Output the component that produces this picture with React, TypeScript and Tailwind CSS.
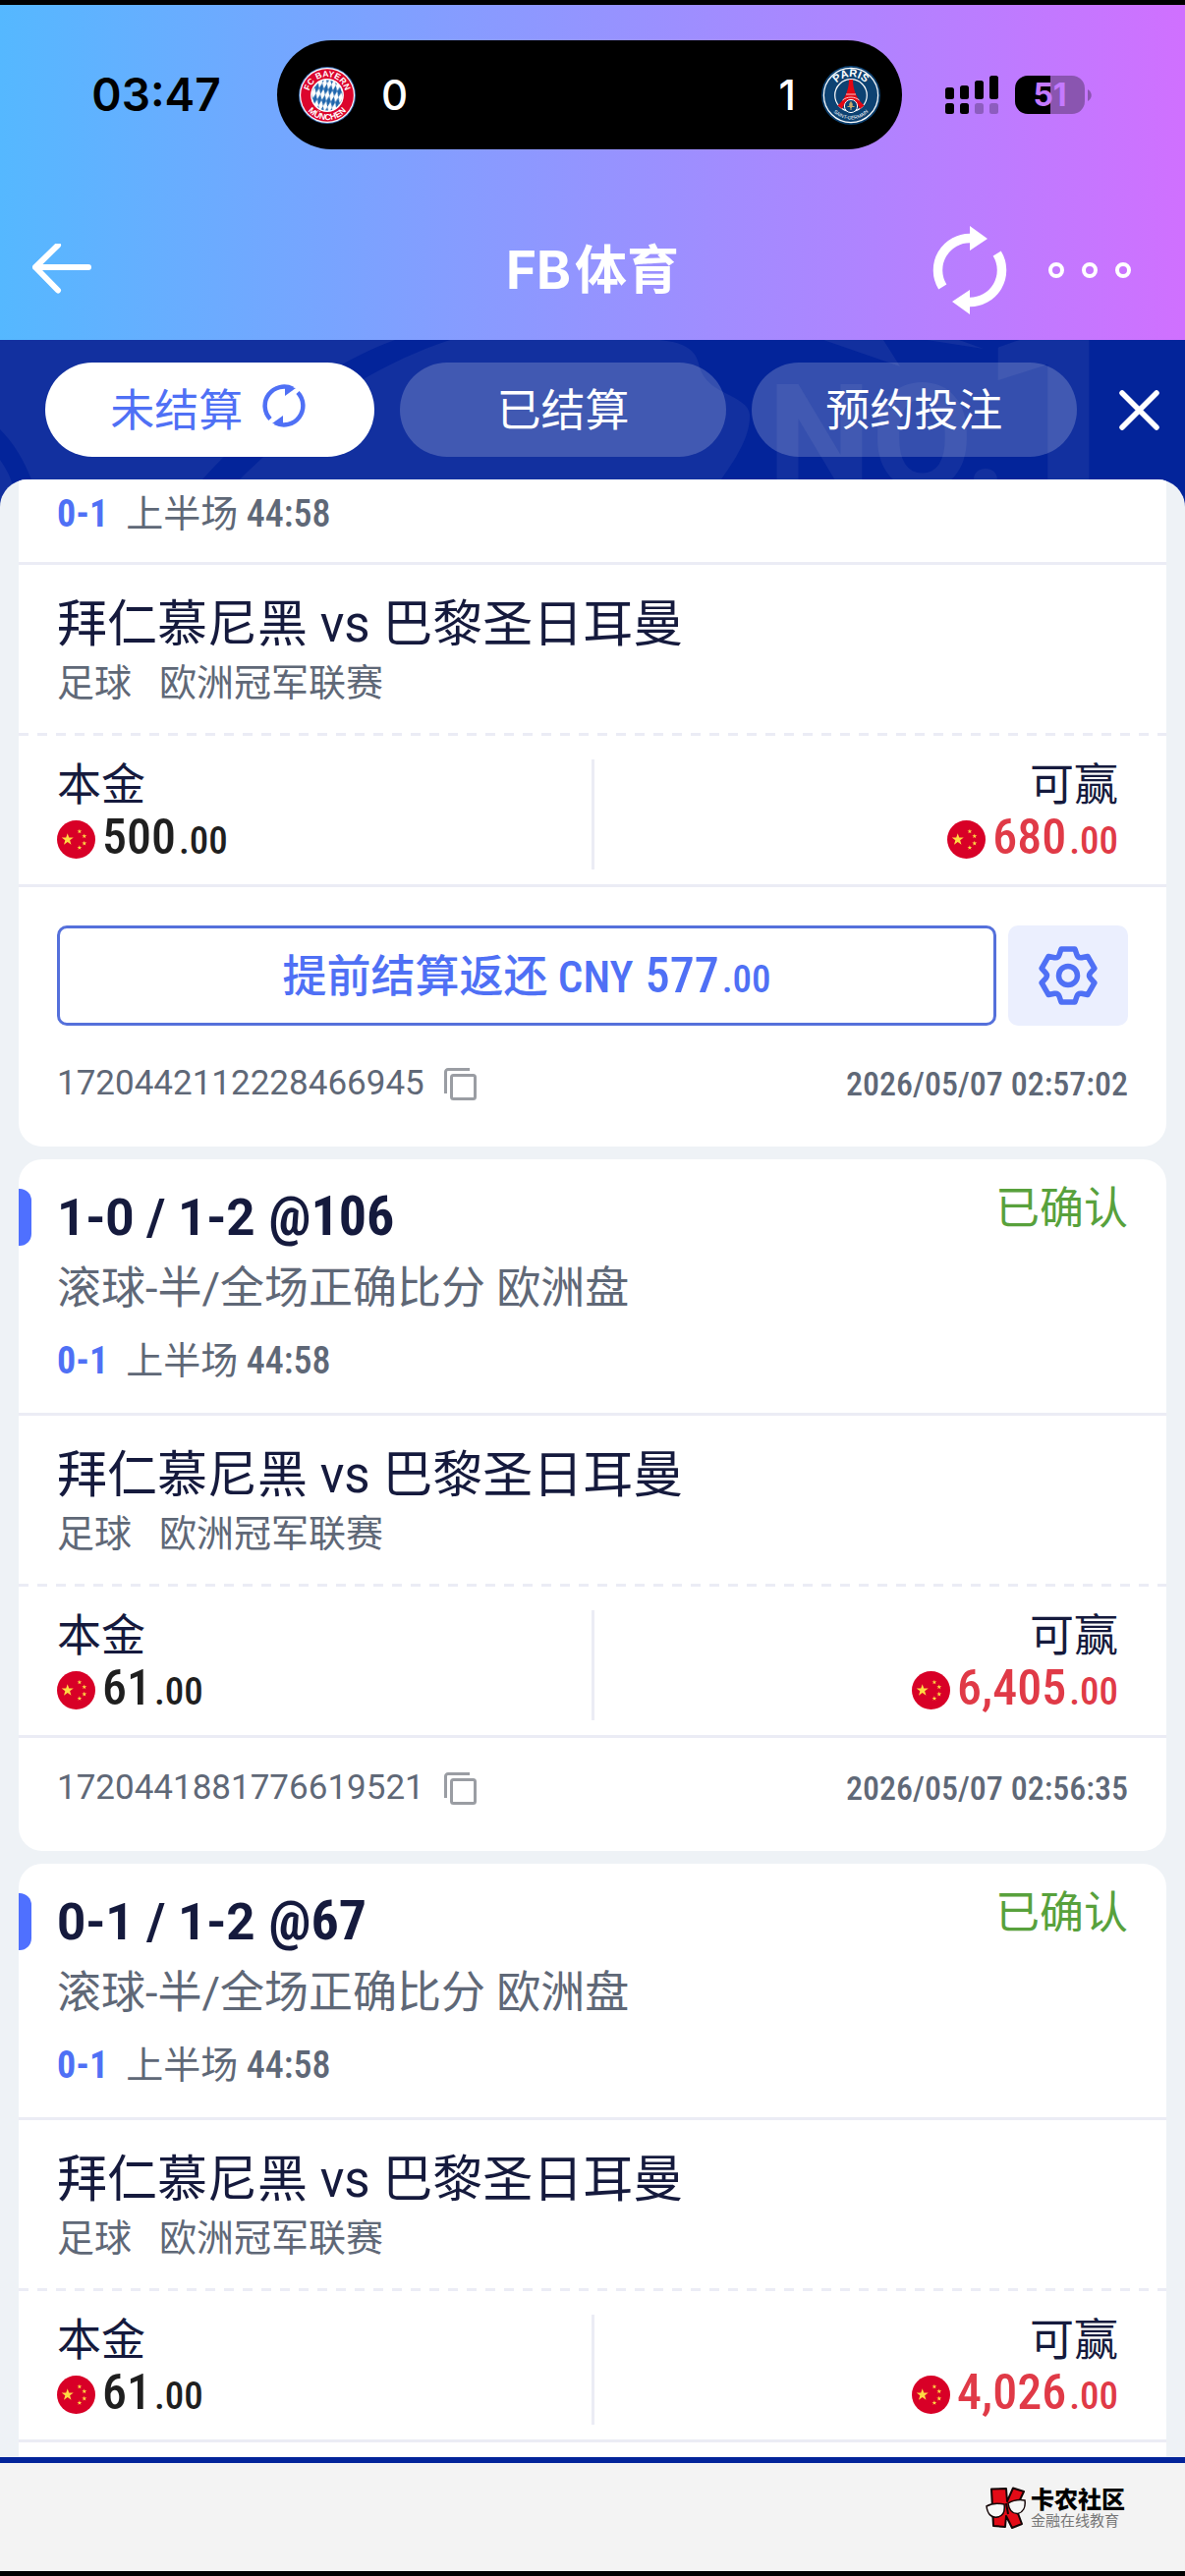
import React from "react";

const CONDENSED = "font-['Roboto_Condensed','Noto_Sans_CJK_SC',sans-serif]";

function BayernLogo() {
  return (
    <svg viewBox="-30 -30 60 60" className="size-[58px] shrink-0" role="img" aria-label="FC Bayern München">
      <defs>
        <pattern id="lozenge" width="4.800" height="12" patternUnits="userSpaceOnUse" patternTransform="rotate(10)">
          <rect width="4.800" height="12" fill="#fff" />
          <path d="M2.400 0L4.800 6L2.400 12L0 6Z" fill="#1f66ad" />
        </pattern>
        <path id="bayern-top" d="M-19.500 0A19.500 19.500 0 0 1 19.500 0" />
        <path id="bayern-bottom" d="M-26 0A26 26 0 0 0 26 0" />
      </defs>
      <circle r="30" fill="#3f6fb5" />
      <circle r="29" fill="#fff" />
      <circle r="27.800" fill="#dc052d" />
      <circle r="17.500" fill="#fff" />
      <circle r="16" fill="url(#lozenge)" />
      <g fill="#fff" fontFamily="Liberation Sans" fontWeight="700" fontSize="9" textAnchor="middle">
        <text><textPath href="#bayern-top" startOffset="50%">FC BAYERN</textPath></text>
        <text><textPath href="#bayern-bottom" startOffset="50%">MÜNCHEN</textPath></text>
      </g>
    </svg>
  );
}

function ParisLogo() {
  return (
    <svg viewBox="-30 -30 60 60" className="size-[60px] shrink-0" role="img" aria-label="Paris Saint-Germain">
      <defs>
        <path id="paris-top" d="M-19 0A19 19 0 0 1 19 0" />
        <path id="paris-bottom" d="M-24.500 0A24.500 24.500 0 0 0 24.500 0" />
      </defs>
      <circle r="30" fill="#0d4272" />
      <circle r="27.600" fill="none" stroke="#fff" strokeWidth="1.200" />
      <circle r="16.300" fill="none" stroke="#fff" strokeWidth="1.200" />
      <path d="M-2 -16H2C2 -7 5 3 13.500 10.500L9 14C6 4 -6 4 -9 14L-13.500 10.500C-5 3 -2 -7 -2 -16Z" fill="#e30613" />
      <path d="M-5 -1H5M-8.500 5C-4 1 4 1 8.500 5" stroke="#fff" strokeWidth=".8" fill="none" />
      <circle cy="11" r="6.600" fill="#0d4272" stroke="#fff" strokeWidth="1" />
      <path d="M0 6.500C2 9 1.500 11 0 13C-1.500 11 -2 9 0 6.500ZM-3.500 11.500H3.500M0 12V15" fill="#c9a76a" stroke="#c9a76a" strokeWidth="1" />
      <g fill="#fff" fontFamily="Liberation Sans" textAnchor="middle">
        <text fontSize="11" fontWeight="700"><textPath href="#paris-top" startOffset="50%">PARIS</textPath></text>
        <text fontSize="5"><textPath href="#paris-bottom" startOffset="50%">SAINT-GERMAIN</textPath></text>
      </g>
    </svg>
  );
}

function Signal() {
  return (
    <svg viewBox="0 0 54 39" className="h-[39px] w-[54px]" role="img" aria-label="信号">
      <rect x="0" y="12" width="9" height="12" rx="2.500" />
      <rect x="15" y="10" width="9" height="14" rx="2.500" />
      <rect x="30" y="5" width="9" height="19" rx="2.500" />
      <rect x="45" y="0" width="9" height="24" rx="2.500" />
      <rect x="0" y="28" width="9" height="11" rx="2.500" />
      <rect x="15" y="28" width="9" height="11" rx="2.500" />
      <rect x="30" y="28" width="9" height="11" rx="2.500" opacity=".25" />
      <rect x="45" y="28" width="9" height="11" rx="2.500" opacity=".25" />
    </svg>
  );
}

function Battery() {
  return (
    <div className="flex items-center gap-[3px]">
      <div className="flex h-[39px] w-[71px] items-center justify-center rounded-[13px] bg-[linear-gradient(90deg,#000_0_51%,#8a55b0_51%)] font-['Inter',sans-serif] text-[32px] leading-none font-bold text-[#c47aff]">
        51
      </div>
      <svg viewBox="0 0 4 12" className="h-3 w-1" aria-hidden="true">
        <path d="M0 0C5 3 5 9 0 12Z" fill="#8a55b0" />
      </svg>
    </div>
  );
}

function StatusBar() {
  return (
    <div className="flex h-[111px] items-center">
      <time className="w-[282px] pl-9 text-center font-['Inter',sans-serif] text-[46px] font-semibold text-black">03:47</time>
      <div className="flex h-full flex-1 items-center justify-between rounded-full bg-black px-[22px] font-['Inter',sans-serif] text-[42px] font-medium text-white">
        <div className="flex items-center gap-[26px]">
          <BayernLogo />
          <span>0</span>
        </div>
        <div className="flex items-center gap-[26px]">
          <span>1</span>
          <ParisLogo />
        </div>
      </div>
      <div className="flex w-[288px] items-center gap-[17px] pl-11">
        <Signal />
        <Battery />
      </div>
    </div>
  );
}

function TitleBar() {
  return (
    <header className="grid h-[194px] grid-cols-[1fr_auto_1fr] items-center px-[33px] pt-[52px] text-white">
      <button type="button" aria-label="返回" className="justify-self-start">
        <svg viewBox="0 0 60 54" className="h-[54px] w-[60px]" fill="none" stroke="currentColor" strokeWidth="6" strokeLinecap="round" strokeLinejoin="round">
          <path d="M26 1.500L3 24L26 47.500M3 24H57" />
        </svg>
      </button>
      <h1 className="flex items-center gap-1 font-['Inter','Noto_Sans_CJK_SC',sans-serif] text-[53px] leading-[76px] font-bold">
        <span>FB</span>
        <span>体育</span>
      </h1>
      <div className="mr-[22px] flex items-center gap-[42px] justify-self-end">
        <button type="button" aria-label="刷新">
          <svg viewBox="-38 -45 76 90" className="h-[90px] w-[76px]" fill="currentColor">
            <path d="M-27.700 17A32.500 32.500 0 0 1 1 -32.500M27.700 -17A32.500 32.500 0 0 1 -1 32.500" fill="none" stroke="currentColor" strokeWidth="9.500" />
            <path d="M0 -45L18 -32L0 -20ZM0 45L-18 32L0 20Z" />
          </svg>
        </button>
        <button type="button" aria-label="更多">
          <svg viewBox="0 0 84 16" className="h-4 w-[84px]" fill="none" stroke="currentColor" strokeWidth="4">
            <circle cx="8" cy="8" r="6" />
            <circle cx="42" cy="8" r="6" />
            <circle cx="76" cy="8" r="6" />
          </svg>
        </button>
      </div>
    </header>
  );
}

function TabsBackdrop() {
  return (
    <svg viewBox="0 0 1206 170" preserveAspectRatio="xMidYMin slice" className="absolute inset-0 h-[170px] w-full" fill="#12309f" aria-hidden="true">
      <path d="M0 0H672C700 3 708 12 711 24C714 38 722 46 738 54C752 61 762 66 763 76C764 98 748 122 734 142L722 170H0Z" />
      <path d="M402 0H458C392 22 335 58 300 90C280 108 262 124 244 142L220 170H180L206 142C262 80 330 26 402 0Z" fill="#03249a" />
      <path d="M0 91C14 105 24 122 32 142L40 170H20L11 142C8 134 4 128 0 122Z" fill="#03249a" />
      <path d="M838 0H899L916 27ZM943 0H976L1001 9Z" />
      <g fontFamily="Roboto" fontWeight="700">
        <text x="781" y="152" fontSize="150">NO.</text>
        <text x="991" y="190" fontSize="300">1</text>
      </g>
    </svg>
  );
}

function SmallRefresh() {
  return (
    <svg viewBox="-22 -22 44 44" className="size-11" fill="currentColor" aria-hidden="true">
      <path d="M-14 13.500A19.500 19.500 0 0 1 9 -17.300M14 -13.500A19.500 19.500 0 0 1 -9 17.300" fill="none" stroke="currentColor" strokeWidth="4.500" />
      <path d="M1 -20L12 -18L1 -10ZM-1 20L-12 18L-1 10Z" />
    </svg>
  );
}

function Tabs() {
  return (
    <nav className="relative flex h-[142px] items-center gap-[43px] bg-[#03249a] pr-[26px] pl-[46px]">
      <TabsBackdrop />
      <div className="relative flex flex-1 gap-[26px] font-['Noto_Sans_CJK_SC',sans-serif] text-[45px] leading-[92px] text-white">
        <button type="button" className="flex h-24 flex-1 items-start justify-center gap-5 rounded-full bg-white pr-1 text-[#4f70f5]">
          未结算
          <span className="flex h-[88px] items-center">
            <SmallRefresh />
          </span>
        </button>
        <button type="button" className="flex h-24 flex-1 justify-center rounded-full bg-white/20">已结算</button>
        <button type="button" className="flex h-24 flex-1 justify-center rounded-full bg-white/20">预约投注</button>
      </div>
      <button type="button" aria-label="关闭" className="relative text-white">
        <svg viewBox="0 0 41 41" className="size-[41px]" stroke="currentColor" strokeWidth="5.500" strokeLinecap="round">
          <path d="M3 3L38 38M38 3L3 38" />
        </svg>
      </button>
    </nav>
  );
}

function Star({ x, y, r }: { x: number; y: number; r: number }) {
  const points = Array.from({ length: 10 }, (_, i) => {
    const radius = i % 2 ? r * 0.4 : r;
    const a = (i * Math.PI) / 5 - Math.PI / 2;
    return `${x + radius * Math.cos(a)},${y + radius * Math.sin(a)}`;
  }).join(" ");
  return <polygon points={points} fill="#ffda44" />;
}

function Flag() {
  return (
    <svg viewBox="-20 -20 40 40" className="size-[39px] shrink-0" role="img" aria-label="CNY">
      <circle r="20" fill="#d80027" />
      <Star x={-9} y={0} r={6.5} />
      <Star x={3.5} y={-8.5} r={2.6} />
      <Star x={8.5} y={-3.5} r={2.6} />
      <Star x={8.5} y={4} r={2.6} />
      <Star x={3.5} y={8.5} r={2.6} />
    </svg>
  );
}

function Gear() {
  const turn = (x: number, y: number, k: number) => {
    const a = (k * Math.PI) / 3;
    return `${(x * Math.cos(a) - y * Math.sin(a)).toFixed(2)} ${(x * Math.sin(a) + y * Math.cos(a)).toFixed(2)}`;
  };
  const d = [0, 1, 2, 3, 4, 5]
    .map((k) => `${k ? "L" : "M"}${turn(-7, -27, k)}L${turn(7, -27, k)}L${turn(9, -21, k)}Q${turn(10.4, -17.6, k)} ${turn(-9, -21, k + 1)}`)
    .join("");
  return (
    <svg viewBox="-31 -31 62 62" className="size-[62px]" fill="none" stroke="#4f70f5" strokeWidth="5.500" strokeLinejoin="round" aria-hidden="true">
      <path d={d + "Z"} />
      <circle r="9.500" />
    </svg>
  );
}

function CopyIcon() {
  return (
    <svg viewBox="0 0 33 33" className="h-[33px] w-[33px]" fill="none" stroke="#9a9da3" strokeWidth="3" aria-hidden="true">
      <path d="M1.500 26V4A2.500 2.500 0 0 1 4 1.500H26" />
      <rect x="7.500" y="7.500" width="24" height="24" rx="2" />
    </svg>
  );
}

function Divider() {
  return <div className="h-[3px] bg-[#ebecf5]" />;
}

function Money({ whole }: { whole: string }) {
  return (
    <span className="flex items-baseline gap-[3px]">
      <span className="text-[50px]">{whole}</span>
      <span className="text-[39px]">.00</span>
    </span>
  );
}

function Amount({ label, whole, tone, align }: { label: string; whole: string; tone: string; align: string }) {
  return (
    <div className={`flex flex-1 flex-col ${align}`}>
      <div className="h-[50px] text-[45px] leading-[53px] text-[#151a3d]">{label}</div>
      <div className={`flex h-[62px] items-center gap-[7px] ${CONDENSED} ${tone} leading-[62px] font-medium`}>
        <Flag />
        <Money whole={whole} />
      </div>
    </div>
  );
}

type Bet = { pick?: string; odds?: string; stake: string; win: string; cashOut?: string; id?: string; time?: string };

function BetCard({ bet, shape }: { bet: Bet; shape: string }) {
  return (
    <article className={`bg-white ${shape}`}>
      <div className={bet.pick ? "pt-6 pb-[18px]" : "pb-[14px]"}>
        {bet.pick && (
          <>
            <div className="flex h-[70px] items-center justify-between pr-[39px]">
              <div className="flex items-center gap-[26px]">
                <span className="h-[58px] w-[13px] rounded-r-xl bg-[#4f70ff]" />
                <h2 className="flex items-baseline gap-[14px] text-[51px] leading-[66px] font-bold text-[#151a3d]">
                  {bet.pick}
                  <span className={`${CONDENSED} text-[56px]`}>@{bet.odds}</span>
                </h2>
              </div>
              <span className="-mt-4 text-[45px] leading-[58px] text-[#58a13c]">已确认</span>
            </div>
            <p className="px-[39px] text-[45px] leading-[76px] text-[#5f6877]">滚球-半/全场正确比分 欧洲盘</p>
          </>
        )}
        <p className={`flex h-[70px] items-center gap-[18px] px-[39px] ${CONDENSED} text-[38px] leading-[66px] text-[#5f6877]`}>
          <span className="font-bold text-[#4f70f5]">0-1</span>
          <span>上半场 <span className="font-medium">44:58</span></span>
        </p>
      </div>
      <Divider />
      <div className="px-[39px] pt-[27px] pb-[26px]">
        <h3 className="text-[51px] leading-[68px] text-[#151a3d]">拜仁慕尼黑 vs 巴黎圣日耳曼</h3>
        <p className="flex gap-7 text-[38px] leading-[50px] text-[#5f6877]">
          <span>足球</span>
          <span>欧洲冠军联赛</span>
        </p>
      </div>
      <div className="h-[3px] bg-[repeating-linear-gradient(90deg,#ebecf5_0_10px,transparent_10px_19px)]" />
      <div className="flex pt-6 pr-[49px] pb-[15px] pl-[39px]">
        <Amount label="本金" whole={bet.stake} tone="text-[#1f1f1f]" align="items-start" />
        <div className="ml-[10px] w-[3px] bg-[#ebecf5]" />
        <Amount label="可赢" whole={bet.win} tone="text-[#e03a47]" align="items-end" />
      </div>
      <Divider />
      {bet.cashOut && (
        <div className="flex gap-3 px-[39px] pt-[39px] pb-2">
          <button type="button" className={`flex h-[102px] flex-1 items-center justify-center rounded-[10px] border-[3px] border-[#5570db] ${CONDENSED} text-[45px] font-medium text-[#4f70f5]`}>
            <span className="flex items-baseline gap-3">
              <span>提前结算返还 CNY</span>
              <Money whole={bet.cashOut} />
            </span>
          </button>
          <button type="button" aria-label="设置" className="flex h-[102px] w-[122px] items-center justify-center rounded-[10px] bg-[#ebeffe]">
            <Gear />
          </button>
        </div>
      )}
      {bet.id && (
        <div className="flex items-center justify-between px-[39px] pt-[26px] pb-[39px] text-[35px] leading-[50px] text-[#5f6877]">
          <div className="flex h-[50px] items-center gap-5">
            <span>{bet.id}</span>
            <button type="button" aria-label="复制"><CopyIcon /></button>
          </div>
          <time className={`${CONDENSED} text-[34px] font-medium`}>{bet.time}</time>
        </div>
      )}
    </article>
  );
}

function KanongLogo() {
  return (
    <div className="flex items-center gap-1">
      <svg viewBox="0 0 42 44" className="h-11 w-[42px]" role="img" aria-label="卡农社区">
        <path d="M6 2.500L21 2L22 15L28 1.500L39 5L31 22L37 38L27 42L21 30L20 41L8 40Z" fill="#e30b17" stroke="#140506" strokeWidth="2" strokeLinejoin="round" />
        <path d="M21 17L23 28" stroke="#140506" strokeWidth="2" />
        <path d="M1 20C6 17 14 17 19 18C20 25 18 30 12 31C6 32 2 28 1 20ZM23 17C28 14 34 13 40 14C41 21 38 26 33 27.500C27 28 24 24 23 17Z" fill="#f7f7f7" stroke="#140506" strokeWidth="1.500" />
      </svg>
      <div className="font-['Noto_Sans_CJK_SC',sans-serif]">
        <div className="text-2xl leading-6 font-black text-black">卡农社区</div>
        <div className="text-[15px] leading-5 text-[#777]">金融在线教育</div>
      </div>
    </div>
  );
}

const bets: Bet[] = [
  { stake: "500", win: "680", cashOut: "577", id: "1720442112228466945", time: "2026/05/07 02:57:02" },
  { pick: "1-0 / 1-2", odds: "106", stake: "61", win: "6,405", id: "1720441881776619521", time: "2026/05/07 02:56:35" },
  { pick: "0-1 / 1-2", odds: "67", stake: "61", win: "4,026" },
];

export default function App() {
  return (
    <div className="flex min-h-screen flex-col border-y-[5px] border-black bg-[#03249a] font-['Roboto','Noto_Sans_CJK_SC',sans-serif]">
      <div className="bg-[linear-gradient(90deg,#55b8ff_0%,#9494ff_50%,#d070ff_100%)] pt-9">
        <StatusBar />
        <TitleBar />
      </div>
      <Tabs />
      <main className="relative flex flex-1 flex-col gap-[13px] overflow-hidden rounded-t-[28px] bg-[#eef2f6] px-[19px]">
        <BetCard bet={bets[0]} shape="rounded-b-3xl" />
        <BetCard bet={bets[1]} shape="rounded-3xl" />
        <BetCard bet={bets[2]} shape="flex-1 rounded-t-3xl" />
      </main>
      <footer className="flex h-[116px] items-start justify-end border-t-[6px] border-[#03249a] bg-[#f3f3f3] pt-6 pr-[61px]">
        <KanongLogo />
      </footer>
    </div>
  );
}
